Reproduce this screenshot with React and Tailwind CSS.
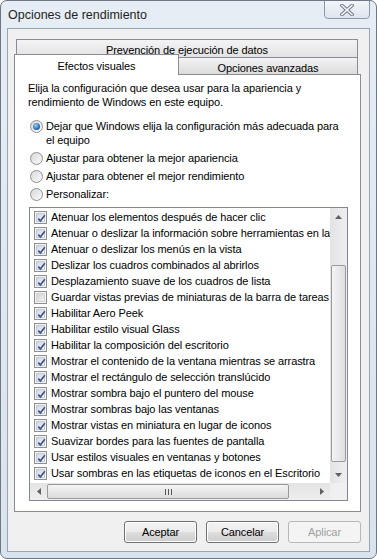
import React from "react";

const effects = [
  ["Atenuar los elementos después de hacer clic", true],
  ["Atenuar o deslizar la información sobre herramientas en la vista", true],
  ["Atenuar o deslizar los menús en la vista", true],
  ["Deslizar los cuadros combinados al abrirlos", true],
  ["Desplazamiento suave de los cuadros de lista", true],
  ["Guardar vistas previas de miniaturas de la barra de tareas", false],
  ["Habilitar Aero Peek", true],
  ["Habilitar estilo visual Glass", true],
  ["Habilitar la composición del escritorio", true],
  ["Mostrar el contenido de la ventana mientras se arrastra", true],
  ["Mostrar el rectángulo de selección translúcido", true],
  ["Mostrar sombra bajo el puntero del mouse", true],
  ["Mostrar sombras bajo las ventanas", true],
  ["Mostrar vistas en miniatura en lugar de iconos", true],
  ["Suavizar bordes para las fuentes de pantalla", true],
  ["Usar estilos visuales en ventanas y botones", true],
  ["Usar sombras en las etiquetas de iconos en el Escritorio", true],
];

const radios = [
  ["Dejar que Windows elija la configuración más adecuada para el equipo", true],
  ["Ajustar para obtener la mejor apariencia", false],
  ["Ajustar para obtener el mejor rendimiento", false],
  ["Personalizar:", false],
];

function Checkbox({ checked }) {
  return (
    <div className="w-[13px] h-[13px] shrink-0 border border-[#8e8f8f] bg-[#f4f4f4] p-px">
      <div
        className={
          "w-full h-full border " +
          (checked
            ? "border-[#c4c9d6] bg-gradient-to-br from-[#cdd3e2] to-[#f4f6fa]"
            : "border-[#d6d6d6] bg-gradient-to-br from-[#d2d2d2] to-[#f2f2f2]")
        }
      >
        {checked && (
          <svg width="9" height="9" viewBox="0 0 9 9" className="block">
            <path d="M1.3 4.6 L3.4 7 L7.8 1.2" fill="none" stroke="#3c5384" strokeWidth="1.7" />
          </svg>
        )}
      </div>
    </div>
  );
}

function Radio({ checked }) {
  return (
    <div className="w-[13px] h-[13px] shrink-0 rounded-full border border-[#8e8f8f] bg-gradient-to-br from-[#d8d8d8] to-[#fbfbfb] flex items-center justify-center">
      {checked && (
        <div className="w-[7px] h-[7px] rounded-full bg-[radial-gradient(circle_at_40%_35%,#9fd0f5,#2a6bb5_60%,#1b4f92)]" />
      )}
    </div>
  );
}

function Arrow({ dir }) {
  const paths = {
    up: "M0 4 L3.5 0 L7 4 Z",
    down: "M0 0 L3.5 4 L7 0 Z",
    left: "M4 0 L0 3.5 L4 7 Z",
    right: "M0 0 L4 3.5 L0 7 Z",
  };
  const vertical = dir === "up" || dir === "down";
  return (
    <svg width={vertical ? 7 : 4} height={vertical ? 4 : 7} viewBox={vertical ? "0 0 7 4" : "0 0 4 7"}>
      <path d={paths[dir]} fill="#606060" />
    </svg>
  );
}

function Button({ children, disabled }) {
  return (
    <div
      className={
        "w-[73px] h-[22px] rounded-[3px] border flex items-center justify-center p-px " +
        (disabled ? "border-[#b5b9bd] bg-[#f4f4f4]" : "border-[#707070] bg-white")
      }
    >
      <div
        className={
          "w-full h-full rounded-[2px] flex items-center justify-center " +
          (disabled
            ? "bg-[#f4f4f4] text-[#a0a0a0]"
            : "bg-[linear-gradient(#f2f2f2_0%,#ebebeb_50%,#dddddd_51%,#cfcfcf_100%)] text-black")
        }
      >
        {children}
      </div>
    </div>
  );
}

export default function App() {
  return (
    <div className="w-[377px] h-[559px] flex flex-col rounded-[7px] border border-[#6d7884] bg-gradient-to-b from-[#e6edf5] to-[#d9e3ee] font-['Liberation_Sans',sans-serif] text-[11px] tracking-[-0.1px] text-black overflow-hidden">
      {/* title bar */}
      <div className="h-[27px] flex justify-between pl-[7px] pr-[6px] shrink-0">
        <div className="self-center text-[12.5px] tracking-normal text-[#1e1e1e] pt-[2px]">Opciones de rendimiento</div>
        <div className="w-[46px] h-[19px] -mt-px rounded-b-[4px] border border-[#8e99a7] bg-gradient-to-b from-[#f3f6fa] to-[#dde5ee] flex items-center justify-center">
          <svg width="14" height="12" viewBox="0 0 14 12">
            <path d="M2 1.5 L12 10.5 M12 1.5 L2 10.5" stroke="#6f7882" strokeWidth="3.6" strokeLinecap="square" />
            <path d="M2 1.5 L12 10.5 M12 1.5 L2 10.5" stroke="#f4f6f8" strokeWidth="1.6" strokeLinecap="square" />
          </svg>
        </div>
      </div>

      {/* client area */}
      <div className="mx-[6px] h-[524px] border border-[#9aa5b1] bg-[#f0f0f0] flex flex-col">
        <div className="pt-[10px] pl-[6px] pr-[8px]">
          {/* back tab row */}
          <div className="ml-[2px] mr-[3px] h-[19px] border border-b-0 border-[#898c95] bg-gradient-to-b from-[#f3f3f3] to-[#e2e2e2] flex justify-center pt-[2px]">
            Prevención de ejecución de datos
          </div>
          {/* front tab row */}
          <div className="flex -mt-[4px] h-[20px] items-end relative z-10">
            <div className="w-[165px] h-[21px] -mb-px border border-b-0 border-[#898c95] bg-white flex justify-center pt-[3px]">
              Efectos visuales
            </div>
            <div className="w-[179px] h-[17px] border border-l-0 border-b-0 border-[#898c95] bg-gradient-to-b from-[#f3f3f3] to-[#dcdcdc] flex justify-center pt-[2px]">
              Opciones avanzadas
            </div>
          </div>
          {/* tab panel */}
          <div className="h-[438px] border border-[#898c95] bg-white pt-[6px] pl-[13px] pr-[12px] flex flex-col">
            <p className="leading-[14px] w-[300px]">
              Elija la configuración que desea usar para la apariencia y rendimiento de Windows en este equipo.
            </p>
            <div className="mt-[10px] flex flex-col gap-[4px]">
              {radios.map(([label, checked]) => (
                <div key={label} className="flex items-start gap-[3px] pl-[2px]">
                  <div className="pt-px">
                    <Radio checked={checked} />
                  </div>
                  <span className="leading-[14px] w-[296px]">{label}</span>
                </div>
              ))}
            </div>

            {/* list box */}
            <div className="mt-[6px] ml-px h-[294px] border border-[#828790] flex flex-col">
              <div className="flex h-[275px]">
                <div className="flex-1 overflow-hidden pt-px">
                  {effects.map(([label, checked]) => (
                    <div key={label} className="h-[16px] flex items-center gap-[4px] pl-[4px] whitespace-nowrap">
                      <Checkbox checked={checked} />
                      <span>{label}</span>
                    </div>
                  ))}
                </div>
                <div className="w-[17px] bg-gradient-to-r from-[#e3e3e3] to-[#efefef] flex flex-col items-stretch">
                  <div className="h-[17px] flex items-center justify-center">
                    <Arrow dir="up" />
                  </div>
                  <div className="flex-1 pt-[40px] pb-[4px] px-px flex flex-col">
                    <div className="flex-1 rounded-[2px] border border-[#9a9a9a] bg-gradient-to-r from-[#f4f4f4] to-[#dedede]" />
                  </div>
                  <div className="h-[17px] flex items-center justify-center">
                    <Arrow dir="down" />
                  </div>
                </div>
              </div>
              <div className="h-[17px] flex">
                <div className="flex-1 flex bg-gradient-to-b from-[#e3e3e3] to-[#efefef]">
                  <div className="w-[17px] flex items-center justify-center">
                    <Arrow dir="left" />
                  </div>
                  <div className="w-[242px] py-px">
                    <div className="h-full rounded-[2px] border border-[#9a9a9a] bg-gradient-to-b from-[#f4f4f4] to-[#dcdcdc] flex items-center justify-center gap-[2px]">
                      <div className="w-px h-[6px] bg-[#555]" />
                      <div className="w-px h-[6px] bg-[#555]" />
                      <div className="w-px h-[6px] bg-[#555]" />
                    </div>
                  </div>
                  <div className="flex-1" />
                  <div className="w-[17px] flex items-center justify-center">
                    <Arrow dir="right" />
                  </div>
                </div>
                <div className="w-[17px] bg-[#f0f0f0]" />
              </div>
            </div>
          </div>
        </div>

        {/* buttons */}
        <div className="mt-[9px] flex justify-end gap-[9px] pr-[8px]">
          <Button>Aceptar</Button>
          <Button>Cancelar</Button>
          <Button disabled>Aplicar</Button>
        </div>
      </div>
    </div>
  );
}
